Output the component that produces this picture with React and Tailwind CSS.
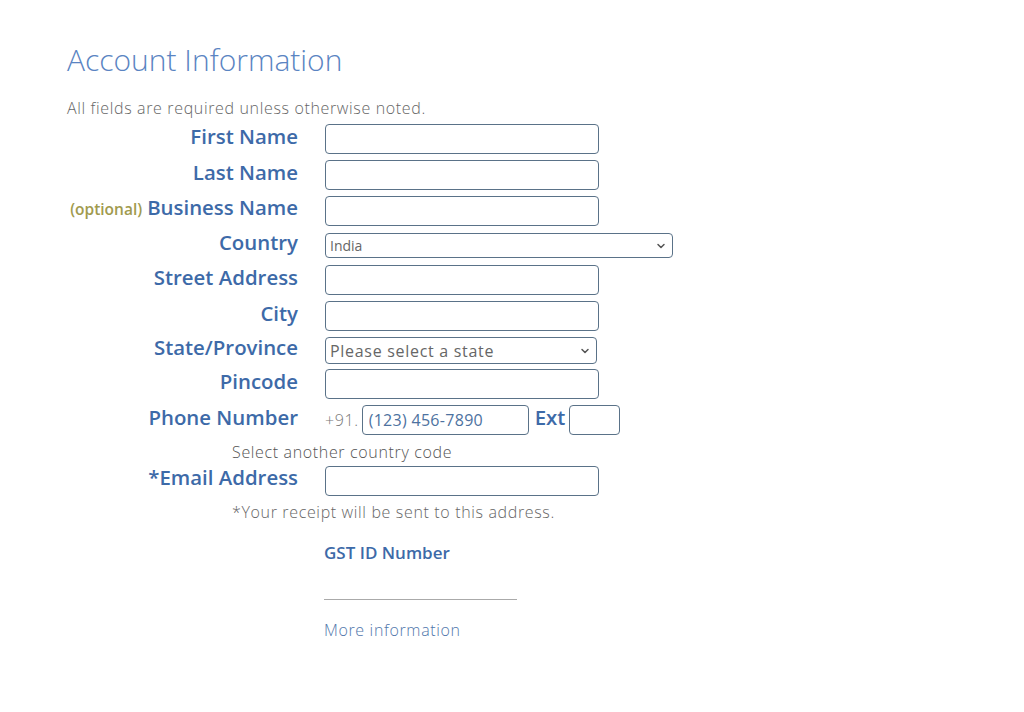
import { ChevronDown } from 'lucide-react'

const font = { fontFamily: '"Open Sans", "Liberation Sans", sans-serif' }

function Label({ children, optional }) {
  return (
    <label className="w-[231px] shrink-0 -translate-y-[3px] text-right text-[20.4px] leading-[27px] font-semibold text-[#3d6aa8]">
      {optional && <span className="text-[15.5px] text-[#a09a4e] mr-[5px]">(optional)</span>}
      {children}
    </label>
  )
}

function TextInput({ className = 'w-[274px]', placeholder }) {
  return (
    <input
      type="text"
      placeholder={placeholder}
      className={`${className} h-[30px] rounded-[4px] border border-[#5a7288] bg-white px-[6px] text-[16px] tracking-[0.3px] text-[#333] placeholder:text-[#4d72a0] outline-none`}
    />
  )
}

function Select({ value, className, textClass }) {
  return (
    <div className={`relative ${className}`}>
      <select
        defaultValue={value}
        className={`w-full h-full appearance-none rounded-[4px] border border-[#5a7288] bg-white pl-[4px] pr-6 ${textClass} text-[#666] outline-none`}
      >
        <option>{value}</option>
      </select>
      <ChevronDown size={12} strokeWidth={3} className="pointer-events-none absolute right-[6px] top-1/2 -translate-y-1/2 text-[#555]" />
    </div>
  )
}

function Row({ label, optional, children, className = 'mb-[6px]' }) {
  return (
    <div className={`flex items-center gap-[27px] ${className}`}>
      <Label optional={optional}>{label}</Label>
      {children}
    </div>
  )
}

export default function App() {
  return (
    <div className="min-h-[712px] bg-white pl-[67px] pt-[40px]" style={font}>
      <h1 className="text-[30px] leading-[40px] font-light text-[#5a84c2]">Account Information</h1>
      <p className="mt-[17px] text-[16px] leading-[22px] font-light tracking-[0.65px] text-[#666]">
        All fields are required unless otherwise noted.
      </p>

      <div className="mt-[5px]">
        <Row label="First Name"><TextInput /></Row>
        <Row label="Last Name"><TextInput /></Row>
        <Row label="Business Name" optional><TextInput /></Row>
        <Row label="Country">
          <Select value="India" className="w-[348px] h-[25px]" textClass="text-[14px]" />
        </Row>
        <Row label="Street Address"><TextInput /></Row>
        <Row label="City"><TextInput /></Row>
        <Row label="State/Province" className="mb-[5px]">
          <Select value="Please select a state" className="w-[272px] h-[27px]" textClass="text-[16px] tracking-[0.7px]" />
        </Row>
        <Row label="Pincode"><TextInput /></Row>
        <Row label="Phone Number" className="mb-0">
          <div className="flex items-center">
            <span className="text-[16px] font-light tracking-[0.6px] text-[#777] mr-[3px]">+91.</span>
            <TextInput className="w-[167px]" placeholder="(123) 456-7890" />
            <span className="ml-[6px] mr-[4px] -translate-y-[3px] text-[20.4px] font-semibold text-[#3d6aa8]">Ext</span>
            <TextInput className="w-[51px]" />
          </div>
        </Row>
        <p className="ml-[165px] mt-[5px] mb-[3px] text-[16px] leading-[22px] font-light tracking-[0.65px] text-[#555]">
          Select another country code
        </p>
        <Row label="*Email Address" className="mb-0"><TextInput /></Row>
        <p className="ml-[165px] mt-[5px] text-[16px] leading-[22px] font-light tracking-[0.65px] text-[#666]">
          *Your receipt will be sent to this address.
        </p>

        <div className="ml-[257px] mt-[19px]">
          <div className="text-[17px] leading-[22px] font-semibold text-[#3d6aa8]">GST ID Number</div>
          <div className="mt-[35px] w-[193px] border-b border-[#aaa]" />
          <a href="#" className="mt-[19px] block text-[16px] leading-[22px] font-light tracking-[0.65px] text-[#4f76ab]">More information</a>
        </div>
      </div>
    </div>
  )
}
